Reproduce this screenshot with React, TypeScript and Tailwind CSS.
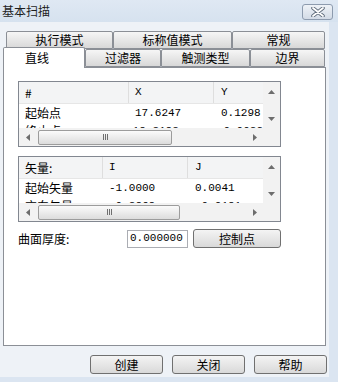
import React from "react";

const CJK = { fontFamily: '"Noto Sans CJK SC", "Noto Sans", sans-serif' };
const MONO = { fontFamily: '"Liberation Mono", "DejaVu Sans Mono", monospace' };

const tabBase =
  "h-full flex items-center justify-center border border-[#8b8f96] rounded-t-[2px] bg-gradient-to-b from-[#f6f6f6] to-[#d8d8d8] text-[12px] text-black";

function UpArrow() {
  return (
    <svg width="7" height="4" viewBox="0 0 7 4">
      <path d="M0 4 L3.5 0 L7 4 Z" fill="#6d6d6d" />
    </svg>
  );
}
function DownArrow() {
  return (
    <svg width="7" height="4" viewBox="0 0 7 4">
      <path d="M0 0 L3.5 4 L7 0 Z" fill="#6d6d6d" />
    </svg>
  );
}
function LeftArrow() {
  return (
    <svg width="4" height="7" viewBox="0 0 4 7">
      <path d="M4 0 L0 3.5 L4 7 Z" fill="#6d6d6d" />
    </svg>
  );
}
function RightArrow() {
  return (
    <svg width="4" height="7" viewBox="0 0 4 7">
      <path d="M0 0 L4 3.5 L0 7 Z" fill="#6d6d6d" />
    </svg>
  );
}

type GridProps = {
  widths: [string, string];
  header: [string, string, string];
  row: [string, string, string];
  next: [string, string, string];
  thumb: string;
};

function Grid({ widths, header, row, next, thumb }: GridProps) {
  return (
    <div className="w-[263px] h-[66px] border border-[#828790] bg-white flex flex-col">
      <div className="flex h-[46px]">
        <div className="flex-1 overflow-hidden flex flex-col">
          <div className="h-[22px] shrink-0 flex bg-[#f3f4f5] border-b border-[#e6e6e6]">
            <div className={`${widths[0]} pl-[6px] flex items-center border-r border-[#dedede] text-[12px]`} style={CJK}>
              {header[0]}
            </div>
            <div className={`${widths[1]} pl-[6px] flex items-center border-r border-[#dedede] text-[11px]`} style={MONO}>
              {header[1]}
            </div>
            <div className="flex-1 pl-[7px] flex items-center text-[11px]" style={MONO}>
              {header[2]}
            </div>
          </div>
          {[row, next].map((r, i) => (
            <div key={i} className="h-[18px] shrink-0 flex items-center">
              <div className={`${widths[0]} pl-[6px] text-[12px] leading-none`} style={CJK}>
                {r[0]}
              </div>
              <div className={`${widths[1]} pl-[6px] text-[11px] leading-none`} style={MONO}>
                {r[1]}
              </div>
              <div className="flex-1 pl-[7px] text-[11px] leading-none whitespace-nowrap" style={MONO}>
                {r[2]}
              </div>
            </div>
          ))}
        </div>
        <div className="w-[17px] bg-[#f2f2f2] flex flex-col items-center justify-between pt-[8px] pb-[7px]">
          <UpArrow />
          <DownArrow />
        </div>
      </div>
      <div className="flex h-[18px] bg-[#f2f2f2]">
        <div className="w-[17px] flex items-center justify-center">
          <LeftArrow />
        </div>
        <div className="flex-1 flex items-center">
          <div
            className={`${thumb} h-[15px] ml-[2px] rounded-[2px] border border-[#9c9c9c] bg-gradient-to-b from-[#fbfbfb] to-[#dcdcdc] flex items-center justify-center`}
          >
            <div className="flex gap-[1px]">
              <div className="w-[1px] h-[6px] bg-[#6f6f6f]" />
              <div className="w-[1px] h-[6px] bg-[#6f6f6f]" />
              <div className="w-[1px] h-[6px] bg-[#6f6f6f]" />
            </div>
          </div>
        </div>
        <div className="w-[17px] flex items-center justify-center">
          <RightArrow />
        </div>
        <div className="w-[17px] bg-[#f2f2f2]" />
      </div>
    </div>
  );
}

function Button({ label, className }: { label: string; className: string }) {
  return (
    <div
      className={`${className} flex items-center justify-center border border-[#707070] rounded-[3px] bg-gradient-to-b from-[#f4f4f4] to-[#d9d9d9] text-[12px]`}
      style={CJK}
    >
      {label}
    </div>
  );
}

export default function App() {
  return (
    <div className="w-[338px] h-[382px] bg-[#dbe5f1] flex flex-col overflow-hidden text-black" style={CJK}>
      <div className="h-[22px] shrink-0 flex items-center justify-between bg-gradient-to-b from-[#dfe8f3] to-[#d6e2ef]">
        <span className="pl-[2px] text-[12px] text-[#1e1e1e]">基本扫描</span>
        <div className="w-[31px] h-[16px] mr-[5px] mt-[2px] rounded-[3px] border border-[#8d9bae] bg-gradient-to-b from-[#eef2f7] to-[#d3dbe6] flex items-center justify-center">
          <svg width="14" height="10" viewBox="0 0 14 10">
            <path d="M2 1 L12 9 M12 1 L2 9" stroke="#5f6b7b" strokeWidth="3.6" strokeLinecap="round" />
            <path d="M2 1 L12 9 M12 1 L2 9" stroke="#ffffff" strokeWidth="1.8" strokeLinecap="round" />
          </svg>
        </div>
      </div>

      <div className="w-[329px] h-[355px] bg-[#eef2f7] flex flex-col pt-[9px]">
        <div className="h-[18px] flex pl-[6px]">
          <div className={`${tabBase} w-[107px]`}>执行模式</div>
          <div className={`${tabBase} w-[119px]`}>标称值模式</div>
          <div className={`${tabBase} w-[93px]`}>常规</div>
        </div>
        <div className="h-[18px] flex pl-[3px]">
          <div className="w-[82px] h-[21px] -mt-[2px] relative z-10 border border-b-0 border-[#8b8f96] rounded-t-[2px] bg-white flex items-center pl-[21px] text-[12px]">
            直线
          </div>
          <div className={`${tabBase} w-[76px]`}>过滤器</div>
          <div className={`${tabBase} w-[89px]`}>触测类型</div>
          <div className={`${tabBase} w-[75px]`}>边界</div>
        </div>

        <div className="ml-[3px] w-[323px] h-[279px] border border-[#8b8f96] bg-white flex flex-col pl-[14px] pt-[13px]">
          <Grid
            widths={["w-[110px]", "w-[85px]"]}
            header={["#", "X", "Y"]}
            row={["起始点", "17.6247", "0.1298"]}
            next={["终止点", "18.3183", "-0.0032"]}
            thumb="w-[134px]"
          />
          <div className="mt-[9px]">
            <Grid
              widths={["w-[84px]", "w-[85px]"]}
              header={["矢量:", "I", "J"]}
              row={["起始矢量", "-1.0000", "0.0041"]}
              next={["方向矢量", "-0.3868", "-0.9181"]}
              thumb="w-[142px]"
            />
          </div>
          <div className="mt-[7px] flex items-center h-[19px]">
            <span className="w-[109px] text-[12px]">曲面厚度:</span>
            <div className="w-[61px] h-[18px] border border-[#abadb3] bg-white flex items-center pl-[2px] text-[11px]" style={MONO}>
              0.000000
            </div>
            <Button label="控制点" className="ml-[5px] w-[88px] h-[19px]" />
          </div>
        </div>

        <div className="mt-[9px] flex justify-end gap-[9px] pr-[2px]">
          <Button label="创建" className="w-[73px] h-[19px]" />
          <Button label="关闭" className="w-[73px] h-[19px]" />
          <Button label="帮助" className="w-[73px] h-[19px]" />
        </div>
      </div>
    </div>
  );
}
